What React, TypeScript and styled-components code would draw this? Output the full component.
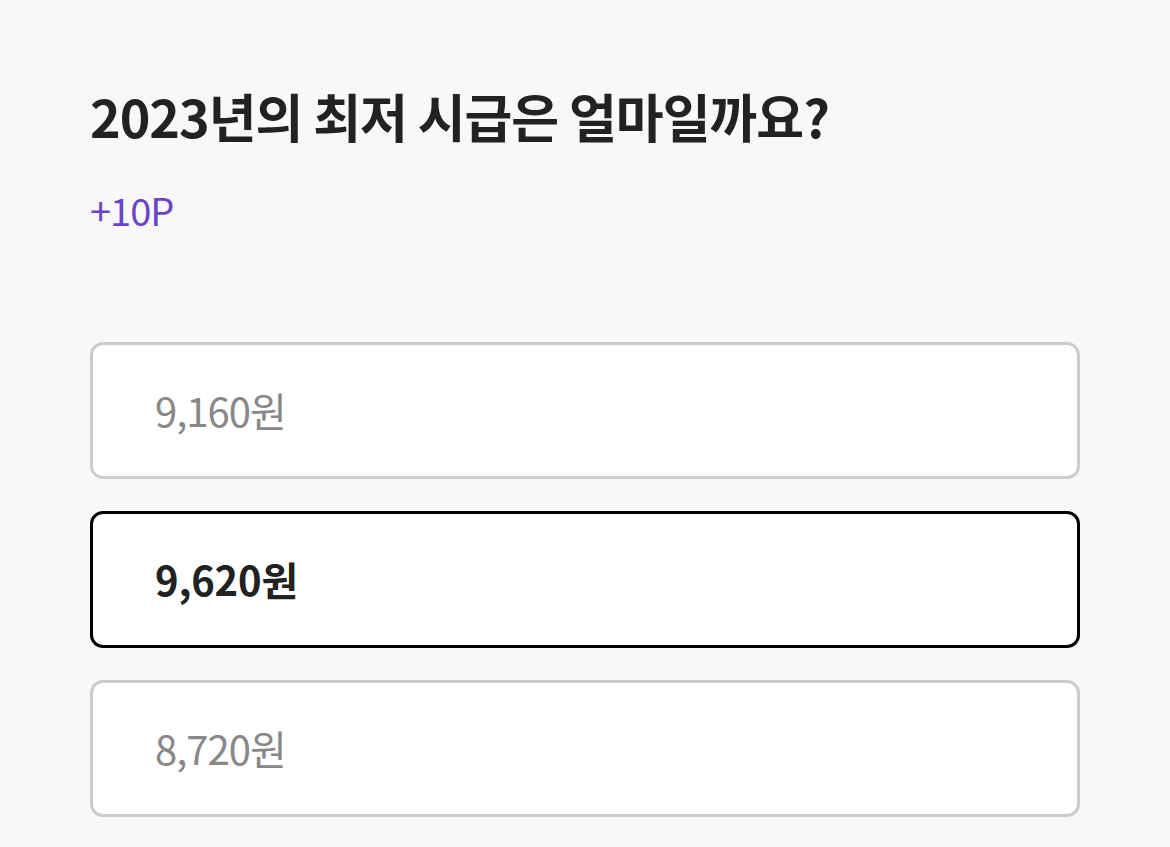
import React, { useState } from "react";
import styled, { createGlobalStyle } from "styled-components";

const GlobalStyle = createGlobalStyle`
  html, body {
    margin: 0;
    padding: 0;
    background: #f8f8f8;
  }
  body {
    font-family: "Noto Sans CJK KR", "Noto Sans", sans-serif;
  }
`;

const options = ["9,160원", "9,620원", "8,720원"];

export default function App() {
  const [selected, setSelected] = useState(1);
  return (
    <>
      <GlobalStyle />
      <Page>
        <Title>2023년의 최저 시급은 얼마일까요?</Title>
        <Point>+10P</Point>
        <OptionList>
          {options.map((label, i) => (
            <Option key={label} $active={i === selected} onClick={() => setSelected(i)}>
              {label}
            </Option>
          ))}
        </OptionList>
      </Page>
    </>
  );
}

const Page = styled.div`
  width: 1170px;
  height: 847px;
  box-sizing: border-box;
  padding: 78px 91px 0 90px;
  background: #f8f8f8;
  overflow: hidden;
`;

const Title = styled.h1`
  margin: 0;
  font-size: 52px;
  font-weight: 700;
  line-height: 76px;
  letter-spacing: -1px;
  color: #222222;
`;

const Point = styled.div`
  margin-top: 32px;
  font-size: 38px;
  line-height: 48px;
  letter-spacing: -1px;
  color: #6a45c8;
`;

const OptionList = styled.div`
  margin-top: 108px;
  display: flex;
  flex-direction: column;
  gap: 32px;
`;

const Option = styled.button<{ $active: boolean }>`
  display: flex;
  align-items: center;
  width: 990px;
  height: 137px;
  box-sizing: border-box;
  padding: 0 0 2px 62px;
  background: #ffffff;
  border: 3px solid ${(p) => (p.$active ? "#000000" : "#cccccc")};
  border-radius: 13px;
  font-family: inherit;
  font-size: 40px;
  font-weight: ${(p) => (p.$active ? 700 : 400)};
  letter-spacing: ${(p) => (p.$active ? "-0.2px" : "-1px")};
  color: ${(p) => (p.$active ? "#222222" : "#888888")};
  text-align: left;
  cursor: pointer;
`;
